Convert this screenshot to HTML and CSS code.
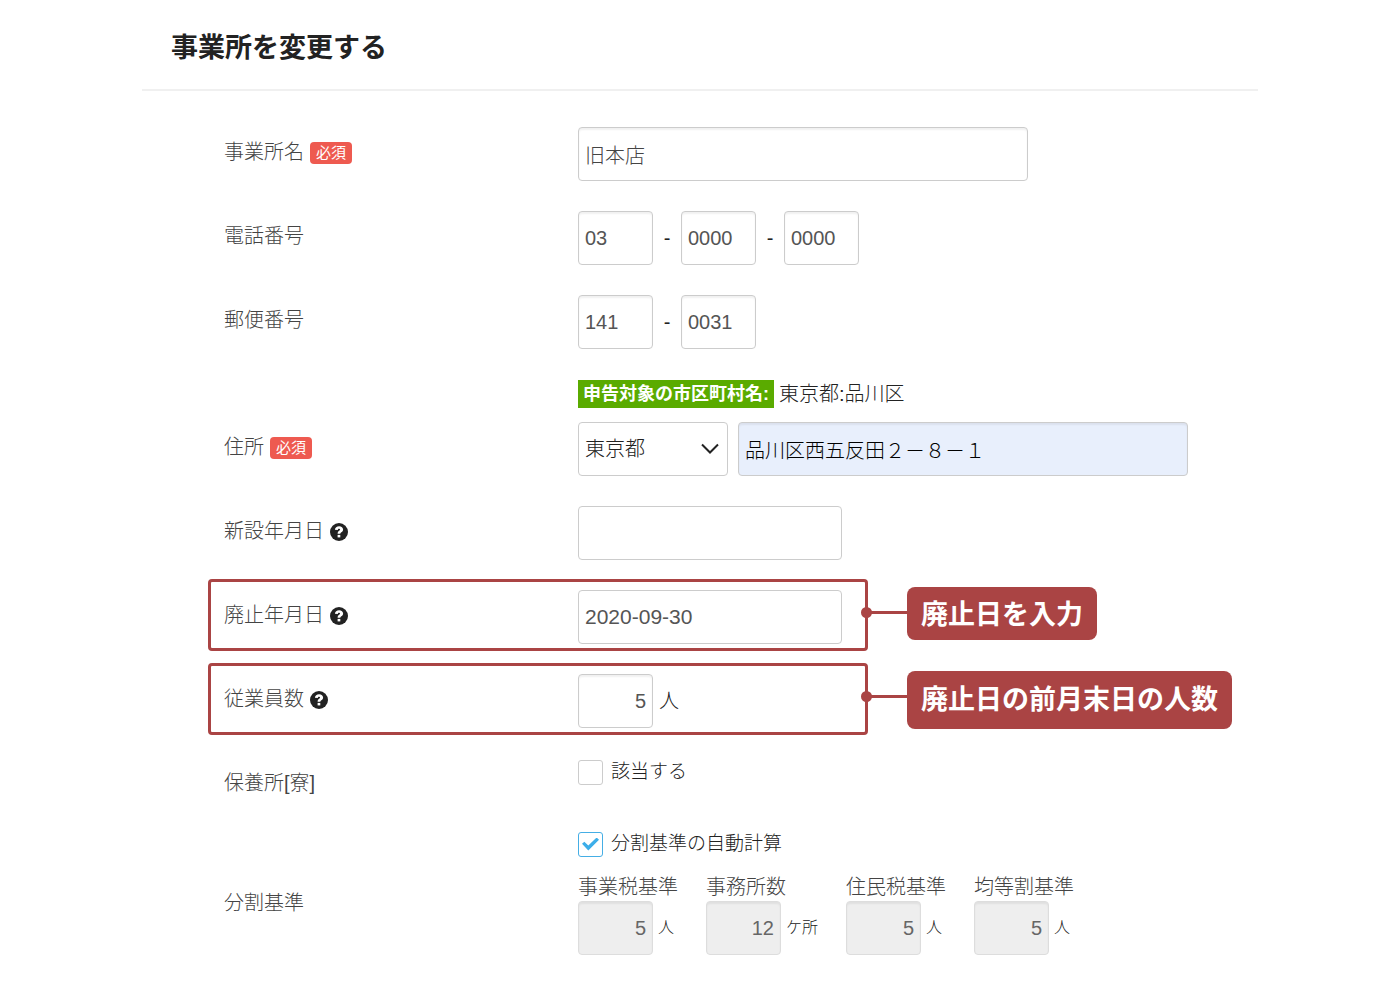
FILE: index.html
```html
<!DOCTYPE html>
<html lang="ja">
<head>
<meta charset="utf-8">
<meta name="viewport" content="width=device-width, initial-scale=1">
<title>事業所を変更する</title>
<link rel="stylesheet" href="styles.css">
</head>
<body>
<svg class="sprite" aria-hidden="true">
  <symbol id="help" viewBox="0 0 18 18">
    <circle cx="9" cy="9" r="9" fill="#222"/>
    <path d="M4.900 6.800C5.100 4.400 6.800 3.200 9.100 3.200c2.400 0 4 1.300 4 3.200 0 1.600-.9 2.300-1.800 2.900-.7.500-1 .8-1 1.500H7.600c0-1.800.7-2.500 1.600-3.100.6-.4.900-.6.900-1.100 0-.5-.4-.8-1-.8-.8 0-1.200.4-1.300 1.300z" fill="#fff"/>
    <rect x="7.600" y="11.900" width="2.700" height="2.500" fill="#fff"/>
  </symbol>
</svg>
<main class="page">
  <header class="page-header"><h1 class="title">事業所を変更する</h1></header>
  <form class="form">
    <div class="row">
      <div class="label"><label for="name">事業所名</label><span class="required">必須</span></div>
      <div class="controls"><input class="input wide" id="name" type="text" value="旧本店"></div>
    </div>
    <div class="row">
      <div class="label"><label for="tel1">電話番号</label></div>
      <div class="controls">
        <input class="input short" id="tel1" type="text" value="03"><span class="dash">-</span><input class="input short" type="text" aria-label="市内局番" value="0000"><span class="dash">-</span><input class="input short" type="text" aria-label="加入者番号" value="0000">
      </div>
    </div>
    <div class="row">
      <div class="label"><label for="zip1">郵便番号</label></div>
      <div class="controls">
        <input class="input short" id="zip1" type="text" value="141"><span class="dash">-</span><input class="input short" type="text" aria-label="郵便番号下4桁" value="0031">
      </div>
    </div>
    <div class="row row-address">
      <div class="label"><label for="address">住所</label><span class="required">必須</span></div>
      <div class="stack">
        <div class="target"><strong class="tag">申告対象の市区町村名:</strong><span>東京都:品川区</span></div>
        <div class="controls address">
          <div class="select-box">
            <select class="input select" aria-label="都道府県"><option>東京都</option></select>
            <svg class="chevron" width="18" height="12" viewBox="0 0 18 12" aria-hidden="true"><path d="M1 1.500l8 8 8-8" fill="none" stroke="#222" stroke-width="2"/></svg>
          </div>
          <input class="input wide autofilled" id="address" type="text" value="品川区西五反田２－８－１">
        </div>
      </div>
    </div>
    <div class="row">
      <div class="label"><label for="opened">新設年月日</label><svg class="help"><use href="#help"/></svg></div>
      <div class="controls"><input class="input date" id="opened" type="text"></div>
    </div>
    <div class="row">
      <div class="label"><label for="closed">廃止年月日</label><svg class="help"><use href="#help"/></svg></div>
      <div class="controls"><input class="input date" id="closed" type="text" value="2020-09-30"></div>
      <div class="annotation"><div class="frame"></div><div class="connector"></div><div class="callout">廃止日を入力</div></div>
    </div>
    <div class="row">
      <div class="label"><label for="staff">従業員数</label><svg class="help"><use href="#help"/></svg></div>
      <div class="controls"><input class="input short number" id="staff" type="text" value="5"><span class="unit">人</span></div>
      <div class="annotation"><div class="frame"></div><div class="connector"></div><div class="callout callout-tall">廃止日の前月末日の人数</div></div>
    </div>
    <div class="row">
      <div class="label">保養所[寮]</div>
      <label class="check"><input class="checkbox" type="checkbox">該当する</label>
    </div>
    <div class="row row-split">
      <div class="label">分割基準</div>
      <div class="stack">
        <label class="check"><input class="checkbox" type="checkbox" checked>分割基準の自動計算</label>
        <div class="criteria">
          <div class="criterion"><label for="c1">事業税基準</label><div class="controls"><input class="input short number" id="c1" type="text" value="5" disabled><span class="unit-small">人</span></div></div>
          <div class="criterion"><label for="c2">事務所数</label><div class="controls"><input class="input short number" id="c2" type="text" value="12" disabled><span class="unit-small">ケ所</span></div></div>
          <div class="criterion"><label for="c3">住民税基準</label><div class="controls"><input class="input short number" id="c3" type="text" value="5" disabled><span class="unit-small">人</span></div></div>
          <div class="criterion"><label for="c4">均等割基準</label><div class="controls"><input class="input short number" id="c4" type="text" value="5" disabled><span class="unit-small">人</span></div></div>
        </div>
      </div>
    </div>
  </form>
</main>
</body>
</html>
```
FILE: styles.css
```css
* { box-sizing: border-box; }

body {
  margin: 0;
  background: #fff;
  color: #222;
  font: 300 20px/28px "Liberation Sans", "Noto Sans CJK JP", sans-serif;
}

.sprite { position: absolute; width: 0; height: 0; }

.page { max-width: 1116px; margin: 0 auto; padding-bottom: 30px; }

.page-header { padding: 26px 29px 23px; border-bottom: 2px solid #f0f0f0; }

.title {
  margin: 0;
  color: #222;
  font: 700 27px/40px "Noto Sans CJK JP", sans-serif;
}

.form { padding: 21px 0 0 82px; }

.row {
  position: relative;
  display: grid;
  grid-template-columns: 354px 1fr;
  align-items: start;
  padding: 15px 0;
}

.row-address { align-items: end; padding-top: 16px; }

.label {
  display: flex;
  align-items: center;
  gap: 6px;
  height: 54px;
  padding-bottom: 5px;
  color: #444;
}

.required {
  margin-top: 2px;
  padding: 0 6px;
  border-radius: 4px;
  background: #ee5a50;
  color: #fff;
  font-size: 15px;
  line-height: 22px;
  font-weight: 400;
}

.help { width: 18px; height: 18px; margin-top: 2px; }

.controls { display: flex; align-items: center; }

.input {
  height: 54px;
  padding: 0 6px;
  border: 1px solid #ccc;
  border-radius: 4px;
  background: #fff;
  box-shadow: inset 0 2px 2px #0000000f;
  color: #555;
  font: inherit;
}

.wide { width: 450px; color: #444; }
.short { width: 75px; }
.date { width: 264px; font-size: 21px; box-shadow: none; }
.number { text-align: right; }

.input:disabled { border-color: #ddd; background: #eee; color: #666; }

.dash { width: 28px; text-align: center; font-weight: 400; }
.unit { margin-left: 6px; }
.unit-small { margin-left: 5px; font-size: 16px; }

.target { display: flex; align-items: center; gap: 5px; margin-bottom: 14px; }

.tag {
  padding: 0 5px;
  background: #5aab00;
  color: #fff;
  font-size: 18px;
  font-weight: 700;
}

.address { gap: 10px; }

.select-box { position: relative; }

.select { width: 150px; appearance: none; box-shadow: none; color: #222; }

.chevron { position: absolute; top: 21px; right: 9px; pointer-events: none; }

.autofilled { background: #e8effc; color: #000; }

.annotation {
  position: absolute;
  top: 4px;
  left: -16px;
  display: flex;
  align-items: flex-start;
  pointer-events: none;
}

.frame { width: 660px; height: 72px; border: 3px solid #aa4444; border-radius: 4px; }

.connector {
  position: relative;
  width: 39px;
  height: 3px;
  margin-top: 32px;
  background: #aa4444;
}

.connector::before {
  content: "";
  position: absolute;
  top: -4px;
  left: -7px;
  width: 11px;
  height: 11px;
  border-radius: 50%;
  background: #aa4444;
}

.callout {
  margin-top: 8px;
  padding: 6px 14px 7px;
  border-radius: 8px;
  background: #aa4444;
  color: #fff;
  font: 700 27px/40px "Noto Sans CJK JP", sans-serif;
  white-space: nowrap;
}

.callout-tall { padding: 7px 14px 11px; }

.check { display: flex; align-items: center; gap: 8px; font-size: 19px; }

.checkbox {
  appearance: none;
  display: grid;
  place-items: center;
  width: 25px;
  height: 25px;
  margin: 0;
  border: 1px solid #ccc;
  border-radius: 3px;
  background: #fff;
}

.checkbox:checked { border-color: #45aee5; }

.checkbox:checked::before {
  content: "";
  width: 17px;
  height: 13px;
  background: #3daee9;
  clip-path: polygon(0 49%, 14% 33%, 37% 62%, 86% 0, 100% 17%, 37% 100%);
}

.row-split { align-items: center; padding-top: 3px; }
.row-split .label { height: 48px; padding: 20px 0 0; }

.criteria { display: flex; gap: 28px; margin-top: 15px; }
.criterion > label { color: #444; }
```
